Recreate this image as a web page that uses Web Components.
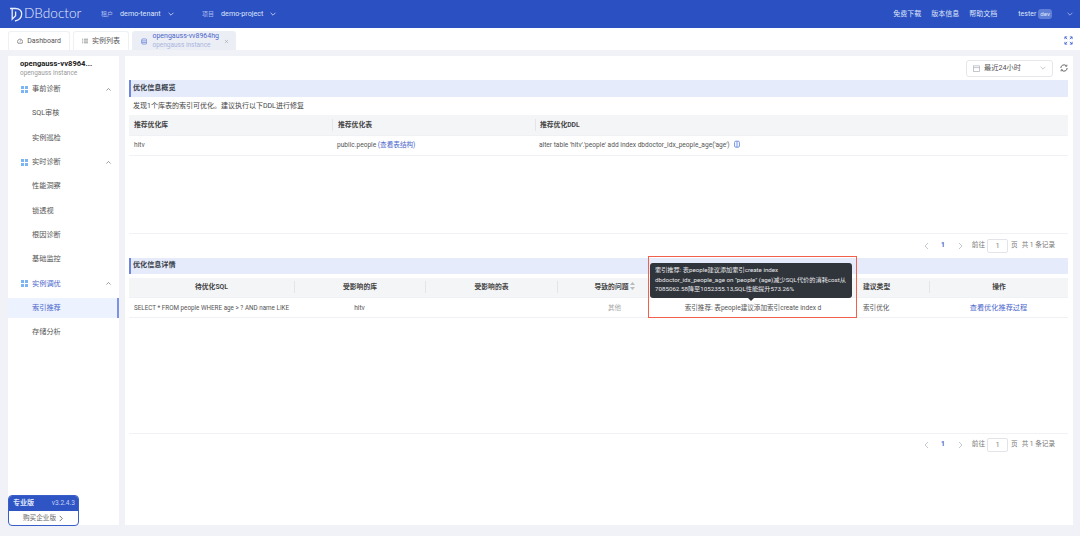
<!DOCTYPE html>
<html lang="zh">
<head>
<meta charset="utf-8">
<title>DBdoctor</title>
<style>
html,body{margin:0;height:100%;}
body{width:1080px;height:536px;overflow:hidden;background:#f0f2f7;color:#444;
  font:7px/1.2 Roboto,"Noto Sans CJK SC",sans-serif;display:flex;flex-direction:column;}
</style>
</head>
<body>
<top-bar></top-bar>
<tab-strip></tab-strip>
<div style="display:flex;gap:6px;padding:6px 7px 11px 8px;flex:1;min-height:0;">
  <side-nav></side-nav>
  <main-panel></main-panel>
</div>

<script>
const chevron = (size, color, up) => `<svg width="${size}" height="${size}" viewBox="0 0 10 10" fill="none" stroke="${color}" stroke-width="1.1"><path d="${up ? 'M2 6.5 5 3.5 8 6.5' : 'M2 3.5 5 6.5 8 3.5'}"/></svg>`;

class TopBar extends HTMLElement {
  constructor() {
    super();
    this.attachShadow({mode:'open'}).innerHTML = `
    <style>
    :host{display:flex;align-items:center;height:28px;background:#2b50c1;color:#dfe6fa;flex:none;}
    .logo{display:flex;align-items:center;gap:1px;margin-left:9px;width:92px;color:#e8edfb;font:300 13.6px/1 Lato,sans-serif;}
    .sel{display:flex;align-items:center;gap:7px;font-size:7.2px;}
    .sel small{font-size:6px;color:#aebdf0;}
    .sel svg{margin-left:-1px;}
    .a{width:101px;}
    .links{margin-left:auto;display:flex;gap:10px;}
    .user{display:flex;align-items:center;gap:2px;margin:0 6px 0 21px;}
    .dev{background:#5f7ed6;border-radius:3px;padding:0 2px;font-size:6.2px;line-height:10px;}
    .user svg{margin-left:12px;}
    </style>
    <div class="logo">
      <svg width="14" height="15" viewBox="0 0 14 15" fill="none" stroke="#e8edfb" stroke-width="1.3"><path d="M1 1.5h5.5c4 0 6.2 2 6.2 5.2 0 3.5-2.6 6.3-6.7 7.3"/><path d="M3.2 1.5v10.7l3.4-3.4V4.5"/></svg>
      <span>DBdoctor</span>
    </div>
    <div class="sel a"><small>租户</small><span>demo-tenant</span>${chevron(8,'#c7d2f5')}</div>
    <div class="sel"><small>项目</small><span>demo-project</span>${chevron(8,'#c7d2f5')}</div>
    <div class="links"><span>免费下载</span><span>版本信息</span><span>帮助文档</span></div>
    <div class="user"><span>tester</span><span class="dev">dev</span>${chevron(8,'#9fb2ea')}</div>`;
  }
}

class TabStrip extends HTMLElement {
  constructor() {
    super();
    this.attachShadow({mode:'open'}).innerHTML = `
    <style>
    :host{display:flex;align-items:flex-end;gap:3px;height:22px;background:#fff;padding-left:8px;flex:none;position:relative;}
    .tab{display:flex;align-items:center;gap:4px;height:19px;box-sizing:border-box;border:1px solid #eef0f4;border-bottom:0;border-radius:3px 3px 0 0;padding:0 8px;color:#555;white-space:nowrap;}
    .on{background:#eceef5;border-color:#eceef5;color:#4a66cc;padding:0 5px 0 8px;gap:5px;}
    .two{line-height:9px;font-size:7px;}
    .two small{display:block;font-size:6.5px;color:#a9b5de;}
    .full{position:absolute;right:7px;top:8px;}
    </style>
    <div class="tab" style="width:62px">
      <svg width="8" height="8" viewBox="0 0 10 10" fill="none" stroke="#555" stroke-width="1"><path d="M1.6 8.6a4.2 4.2 0 1 1 6.8 0z"/><path d="M5 6 6.4 3.8"/></svg>
      <span>Dashboard</span></div>
    <div class="tab" style="width:56px">
      <svg width="7" height="8" viewBox="0 0 10 10" stroke="#555" stroke-width="1"><path d="M0 2h1.5M3 2h7M0 5h1.5M3 5h7M0 8h1.5M3 8h7"/></svg>
      <span>实例列表</span></div>
    <div class="tab on" style="width:104px">
      <svg width="9" height="9" viewBox="0 0 10 10" fill="none" stroke="#5a78d8" stroke-width="1"><rect x="1" y="1" width="8" height="8" rx="2"/><path d="M1 4h8M1 6.5h8"/></svg>
      <div class="two">opengauss-vv8964hg<small>opengauss instance</small></div>
      <svg width="7" height="7" viewBox="0 0 8 8" stroke="#a5a8b0" stroke-width="1" style="margin-left:auto;margin-right:1px"><path d="M1.5 1.5l5 5M6.5 1.5l-5 5"/></svg>
    </div>
    <svg class="full" width="9" height="9" viewBox="0 0 10 10" fill="none" stroke="#4a6ad0" stroke-width="1"><path d="M1 3.5V1h2.5M6.5 1H9v2.5M9 6.5V9H6.5M3.5 9H1V6.5M1 1l2.5 2.5M9 1 6.5 3.5M9 9 6.5 6.5M1 9l2.5-2.5"/></svg>`;
  }
}

class NavItem extends HTMLElement {
  constructor() {
    super();
    const group = this.hasAttribute('group');
    this.attachShadow({mode:'open'}).innerHTML = `
    <style>
    :host{display:flex;align-items:center;height:24.35px;font-size:7.2px;color:#555;box-sizing:border-box;padding-left:24px;}
    :host([active]){background:#edf3fe;color:#4a66cc;border-right:2px solid #7b93e2;height:20px;margin:2.2px 0;}
    :host([open]){color:#4a66cc;}
    svg.i{margin-left:-11px;margin-right:4px;}
    svg.c{margin-left:auto;margin-right:7px;}
    </style>
    ${group ? `<svg class="i" width="7" height="7" viewBox="0 0 7 7" fill="#7db5f3"><rect width="3" height="3"/><rect x="4" width="3" height="3"/><rect y="4" width="3" height="3"/><rect x="4" y="4" width="3" height="3"/></svg>` : ''}
    <slot></slot>
    ${group ? `<svg class="c" width="7" height="7" viewBox="0 0 10 10" fill="none" stroke="#888" stroke-width="1.2"><path d="M2 6.5 5 3.5 8 6.5"/></svg>` : ''}`;
  }
}

class PromoCard extends HTMLElement {
  constructor() {
    super();
    this.attachShadow({mode:'open'}).innerHTML = `
    <style>
    :host{position:absolute;left:0;bottom:-1px;width:71px;height:31px;box-sizing:border-box;border:1px solid #3a5ec8;border-radius:4px;overflow:hidden;background:#fff;display:block;}
    .t{display:flex;justify-content:space-between;align-items:center;height:15px;background:#2f55c4;color:#dfe6fa;padding:0 3px 0 4px;font-size:7px;}
    .t b{font-weight:700;}
    .t span{font-size:6.6px;color:#c5d1f5;}
    .b{display:flex;justify-content:center;align-items:center;height:15px;color:#666;font-size:6.6px;gap:2px;}
    </style>
    <div class="t"><b>专业版</b><span>v3.2.4.3</span></div>
    <div class="b">购买企业版 <svg width="6" height="7" viewBox="0 0 6 8" fill="none" stroke="#666"><path d="M1.5 1 4.5 4 1.5 7"/></svg></div>`;
  }
}

class SideNav extends HTMLElement {
  constructor() {
    super();
    this.attachShadow({mode:'open'}).innerHTML = `
    <style>
    :host{display:block;position:relative;width:111px;background:#fff;flex:none;}
    .head{padding:3px 0 0 12px;height:21px;box-sizing:border-box;}
    .head b{display:block;color:#222;font-size:7.6px;line-height:10px;}
    .head small{display:block;font-size:6.4px;line-height:8px;color:#999;}
    </style>
    <div class="head"><b>opengauss-vv8964...</b><small>opengauss instance</small></div>
    <nav-item group>事前诊断</nav-item>
    <nav-item>SQL审核</nav-item>
    <nav-item>实例巡检</nav-item>
    <nav-item group>实时诊断</nav-item>
    <nav-item>性能洞察</nav-item>
    <nav-item>锁透视</nav-item>
    <nav-item>根因诊断</nav-item>
    <nav-item>基础监控</nav-item>
    <nav-item group open>实例调优</nav-item>
    <nav-item active>索引推荐</nav-item>
    <nav-item>存储分析</nav-item>
    <promo-card></promo-card>`;
  }
}

class SectionTitle extends HTMLElement {
  constructor() {
    super();
    this.attachShadow({mode:'open'}).innerHTML = `
    <style>
    :host{display:flex;align-items:center;background:#e6ebfb;border-left:2px solid #6f86e0;padding-left:2px;font-weight:700;color:#3a3f4a;font-size:7.1px;box-sizing:border-box;}
    </style><slot></slot>`;
  }
}

class PagerBar extends HTMLElement {
  constructor() {
    super();
    this.attachShadow({mode:'open'}).innerHTML = `
    <style>
    :host{display:flex;justify-content:flex-end;align-items:center;color:#777;font-size:6.6px;padding-right:13px;box-sizing:border-box;}
    b{color:#3a5fc8;margin:0 12px 0 11px;}
    .in{display:inline-block;width:21px;height:14px;box-sizing:border-box;line-height:12px;border:1px solid #e2e4e9;border-radius:2px;text-align:center;margin:0 3px 0 2px;}
    .tot{margin-left:4px;}
    .go{margin-left:8px;}
    </style>
    <svg width="7" height="8" viewBox="0 0 6 8" fill="none" stroke="#c5c8ce"><path d="M4.5 1 1.5 4 4.5 7"/></svg>
    <b>1</b>
    <svg width="7" height="8" viewBox="0 0 6 8" fill="none" stroke="#c5c8ce"><path d="M1.5 1 4.5 4 1.5 7"/></svg>
    <span class="go">前往</span><span class="in">1</span><span>页</span><span class="tot">共 1 条记录</span>`;
  }
}

class DataRow extends HTMLElement {
  static get observedAttributes() { return ['cols']; }
  constructor() {
    super();
    this.attachShadow({mode:'open'}).innerHTML = `
    <style>
    :host{display:grid;align-items:center;box-sizing:border-box;height:20px;border-bottom:1px solid #f0f1f4;color:#555;font-size:6.6px;}
    :host([head]){background:#f4f5f7;font-weight:700;color:#444;font-size:6.8px;height:20.5px;}
    </style><slot></slot>`;
  }
  attributeChangedCallback(n, o, v) { this.style.gridTemplateColumns = v; }
}

class DataCell extends HTMLElement {
  constructor() {
    super();
    this.attachShadow({mode:'open'}).innerHTML = `
    <style>
    :host{display:block;padding:0 5px;white-space:nowrap;overflow:hidden;height:12px;line-height:12px;box-sizing:border-box;}
    :host([div]){border-left:1px solid #e3e5ea;}
    :host([c]){text-align:center;}
    </style><slot></slot>`;
  }
}

class RangePicker extends HTMLElement {
  constructor() {
    super();
    this.attachShadow({mode:'open'}).innerHTML = `
    <style>
    :host{display:flex;justify-content:flex-end;align-items:center;height:24px;gap:7px;}
    .p{display:flex;align-items:center;gap:4px;width:87px;height:17px;box-sizing:border-box;border:1px solid #e6e7eb;border-radius:3px;padding:0 5px 0 6px;color:#555;font-size:7.2px;}
    .p svg:last-child{margin-left:auto;}
    </style>
    <div class="p">
      <svg width="7" height="7" viewBox="0 0 8 8" fill="none" stroke="#b5b8bf" stroke-width=".9"><rect x=".5" y="1" width="7" height="6.5"/><path d="M.5 3h7"/></svg>
      <span>最近24小时</span>${chevron(8,'#c0c3c9')}
    </div>
    <svg width="8" height="8" viewBox="0 0 10 10" fill="none" stroke="#555" stroke-width="1.1"><path d="M1 5a4 4 0 0 1 7-2.6M9 5a4 4 0 0 1-7 2.6"/><path d="M8.6 .8v2H6.6M1.4 9.2v-2h2" stroke-width=".9"/></svg>`;
  }
}

class MainPanel extends HTMLElement {
  constructor() {
    super();
    const c1 = '203px 203px 1fr';
    const c2 = '165px 131px 132px 115px 186px 71px 1fr';
    const copyIcon = `<svg width="8" height="8" viewBox="0 0 10 10" fill="none" stroke="#6f8fe0" stroke-width="1.2" style="vertical-align:-1px;margin-left:3px"><rect x="2" y="1.5" width="6" height="7.5" rx="1.5"/><path d="M5 1.5v7.5"/></svg>`;
    this.attachShadow({mode:'open'}).innerHTML = `
    <style>
    :host{display:block;position:relative;flex:1;background:#fff;padding:0 5px 0 4px;min-width:0;}
    .note{height:18px;line-height:18px;padding-left:4px;color:#444;font-size:7px;}
    .grow1{height:77px;border-bottom:1px solid #f0f1f4;}
    .grow2{height:115px;border-bottom:1px solid #f0f1f4;}
    .link{color:#4a66cc;}
    .sort{display:inline-block;vertical-align:-1px;margin-left:2px;}
    .gray{color:#aaa;}
    .act{font-size:7.2px;}
    .tip{position:absolute;left:525px;top:207px;width:202px;height:35px;box-sizing:border-box;background:#30343b;border-radius:3px;color:#e8e9eb;font-size:6.2px;line-height:9.5px;padding:3px 5px;white-space:nowrap;}
    .tip::after{content:"";position:absolute;left:98px;bottom:-3px;border:3px solid transparent;border-bottom:0;border-top-color:#30343b;}
    .box{position:absolute;left:523px;top:200px;width:209px;height:62px;box-sizing:border-box;border:1.5px solid #f2604c;pointer-events:none;}
    </style>
    <range-picker></range-picker>
    <section-title style="height:17px">优化信息概览</section-title>
    <div class="note">发现1个库表的索引可优化。建议执行以下DDL进行修复</div>
    <data-row head cols="${c1}">
      <data-cell>推荐优化库</data-cell><data-cell div>推荐优化表</data-cell><data-cell div style="padding-left:4px">推荐优化DDL</data-cell>
    </data-row>
    <data-row cols="${c1}">
      <data-cell>hitv</data-cell><data-cell>public.people <span class="link">(查看表结构)</span></data-cell>
      <data-cell style="padding-left:4px">alter table 'hitv'.'people' add index dbdoctor_idx_people_age('age')${copyIcon}</data-cell>
    </data-row>
    <div class="grow1"></div>
    <pager-bar style="height:24px"></pager-bar>
    <section-title style="height:16px;margin-bottom:4px">优化信息详情</section-title>
    <data-row head cols="${c2}">
      <data-cell c>待优化SQL</data-cell><data-cell c div>受影响的库</data-cell><data-cell c div>受影响的表</data-cell>
      <data-cell c div>导致的问题<svg class="sort" width="5" height="8" viewBox="0 0 5 8" fill="#bbb"><path d="M2.5 0 5 3H0zM2.5 8 0 5h5z"/></svg></data-cell>
      <data-cell></data-cell><data-cell>建议类型</data-cell><data-cell c div>操作</data-cell>
    </data-row>
    <data-row cols="${c2}">
      <data-cell style="padding-right:0;font-size:6.3px">SELECT * FROM people WHERE age &gt; ? AND name LIKE</data-cell><data-cell c>hitv</data-cell><data-cell></data-cell>
      <data-cell c><span class="gray">其他</span></data-cell>
      <data-cell c style="padding:0 24px 0 0">索引推荐: 表people建议添加索引create index d</data-cell>
      <data-cell>索引优化</data-cell><data-cell c><span class="link act">查看优化推荐过程</span></data-cell>
    </data-row>
    <div class="grow2"></div>
    <pager-bar style="height:21px"></pager-bar>
    <div class="tip">索引推荐: 表people建议添加索引create index<br>dbdoctor_idx_people_age on "people" (age)减少SQL代价的消耗cost从<br>7085062.58降至1052355.13,SQL性能提升573.26%</div>
    <div class="box"></div>`;
  }
}

customElements.define('nav-item', NavItem);
customElements.define('promo-card', PromoCard);
customElements.define('top-bar', TopBar);
customElements.define('tab-strip', TabStrip);
customElements.define('side-nav', SideNav);
customElements.define('section-title', SectionTitle);
customElements.define('pager-bar', PagerBar);
customElements.define('data-cell', DataCell);
customElements.define('data-row', DataRow);
customElements.define('range-picker', RangePicker);
customElements.define('main-panel', MainPanel);
</script>
</body>
</html>
